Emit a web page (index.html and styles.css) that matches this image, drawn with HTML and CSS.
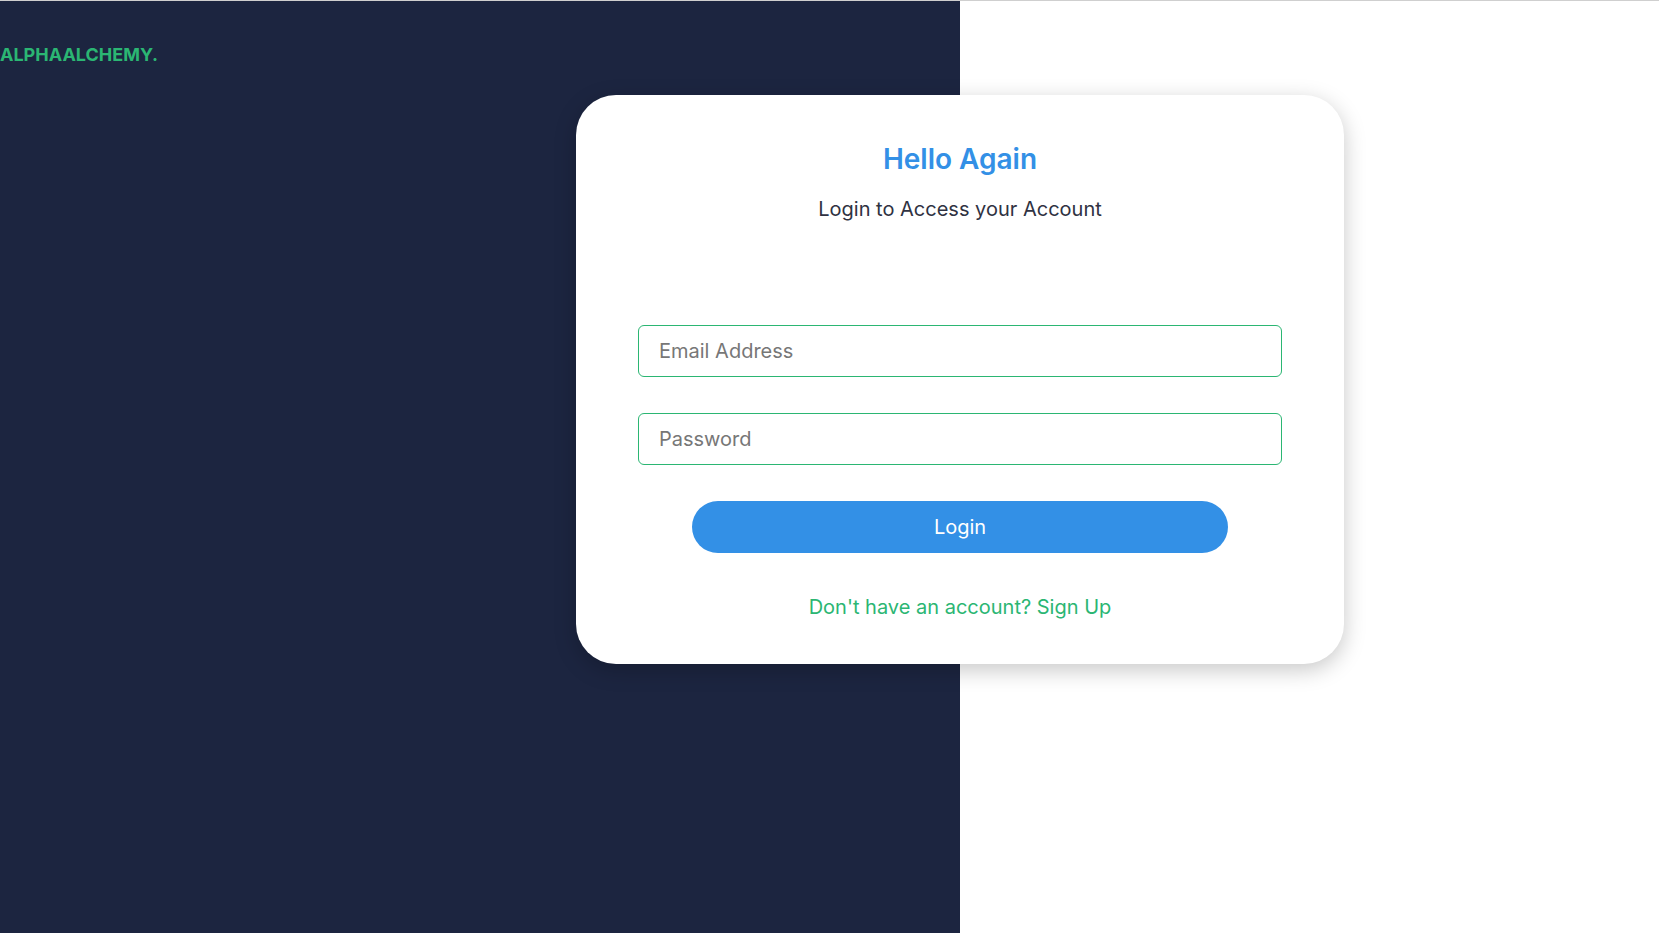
FILE: index.html
```html
<!DOCTYPE html>
<html lang="en">
<head>
<meta charset="utf-8">
<title>AlphaAlchemy - Login</title>
<link rel="stylesheet" href="styles.css">
</head>
<body>
<div class="page">
  <div class="left">
    <div class="logo">ALPHAALCHEMY.</div>
  </div>
  <div class="right"></div>
  <div class="card">
    <h1 class="title">Hello Again</h1>
    <p class="subtitle">Login to Access your Account</p>
    <form class="form">
      <input class="field" type="email" placeholder="Email Address">
      <input class="field" type="password" placeholder="Password">
      <button class="btn" type="button">Login</button>
    </form>
    <a class="signup" href="#">Don't have an account? Sign Up</a>
  </div>
</div>
</body>
</html>
```

FILE: styles.css
```css
* { box-sizing: border-box; }
html, body { margin: 0; padding: 0; }
body {
  font-family: Inter, "Noto Sans", sans-serif;
  background: #ffffff;
}
.page {
  position: relative;
  display: flex;
  height: 933px;
  border-top: 1px solid #cfcfcf;
}
.left {
  width: 960px;
  background: #1c2540;
  padding-top: 42px;
}
.right {
  flex: 1;
  background: #ffffff;
}
.logo {
  color: #2bb673;
  font-weight: 700;
  font-size: 18px;
  line-height: 24px;
}
.card {
  position: absolute;
  left: 576px;
  top: 94px;
  width: 768px;
  height: 569px;
  background: #ffffff;
  border-radius: 40px;
  box-shadow: 0 6px 22px rgba(0, 0, 0, 0.22);
  padding: 47px 62px 0;
  display: flex;
  flex-direction: column;
  align-items: center;
}
.title {
  margin: 0;
  color: #3390e6;
  font-size: 28px;
  line-height: 34px;
  font-weight: 600;
}
.subtitle {
  margin: 21px 0 0;
  color: #2f3242;
  font-size: 20px;
  line-height: 24px;
}
.form {
  margin-top: 104px;
  width: 100%;
  display: flex;
  flex-direction: column;
  align-items: center;
  gap: 36px;
}
.field {
  width: 100%;
  height: 52px;
  border: 1px solid #2bb673;
  border-radius: 6px;
  padding: 0 20px;
  font-family: inherit;
  font-size: 20px;
  color: #333;
  outline: none;
}
.field::placeholder { color: #777777; }
.btn {
  width: 536px;
  height: 52px;
  border: none;
  border-radius: 26px;
  background: #3390e6;
  color: #ffffff;
  font-family: inherit;
  font-size: 20px;
}
.signup {
  margin-top: 42px;
  color: #2bb673;
  font-size: 20px;
  line-height: 24px;
  text-decoration: none;
}
```
